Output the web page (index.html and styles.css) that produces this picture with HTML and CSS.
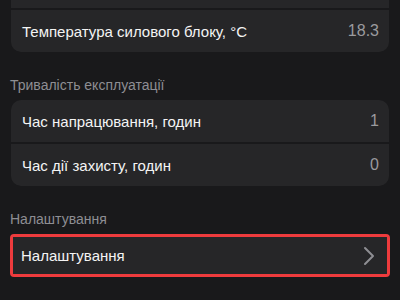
FILE: index.html
```html
<!DOCTYPE html>
<html lang="uk">
<head>
<meta charset="utf-8">
<link rel="stylesheet" href="styles.css">
</head>
<body>
<div class="page">
  <div class="card card-first">
    <div class="row row-hidden"></div>
    <div class="row"><span class="label">Температура силового блоку, °C</span><span class="value">18.3</span></div>
  </div>
  <div class="section-title">Тривалість експлуатації</div>
  <div class="card">
    <div class="row"><span class="label">Час напрацювання, годин</span><span class="value">1</span></div>
    <div class="row"><span class="label">Час дії захисту, годин</span><span class="value">0</span></div>
  </div>
  <div class="section-title">Налаштування</div>
  <div class="card card-selected">
    <div class="row"><span class="label">Налаштування</span>
      <svg class="chevron" width="12" height="20" viewBox="0 0 12 20"><path d="M2 2 L10 10 L2 18" fill="none" stroke="#8e8e93" stroke-width="2" stroke-linecap="round" stroke-linejoin="round"/></svg>
    </div>
  </div>
</div>
</body>
</html>
```

FILE: styles.css
```css
html, body {
  margin: 0;
  padding: 0;
  background: #19191b;
  height: 100%;
  overflow: hidden;
}
body {
  font-family: "Liberation Sans", Arial, sans-serif;
  color: #f4f4f4;
}
.page {
  padding: 0 11px;
  margin-top: -34px;
}
.card {
  background: #19191b;
  border-radius: 10px;
  display: flex;
  flex-direction: column;
  gap: 2px;
  overflow: hidden;
}
.row {
  height: 42px;
  display: flex;
  align-items: center;
  justify-content: space-between;
  padding: 0 10px 0 11px;
  font-size: 15px;
  background: #262628;
}
.value {
  color: #9a9a9e;
  font-size: 16px;
}
.section-title {
  margin: 24px 0 6px -1px;
  height: 18px;
  line-height: 18px;
  font-size: 14px;
  color: #8e8e93;
}
.card-selected {
  margin: 0 -1px;
  border: 3px solid #ee3b3d;
  border-radius: 4px;
  background: #262628;
}
.card-selected .row {
  height: 37px;
  padding: 0 12px 0 8px;
}
.chevron {
  display: block;
}
```
